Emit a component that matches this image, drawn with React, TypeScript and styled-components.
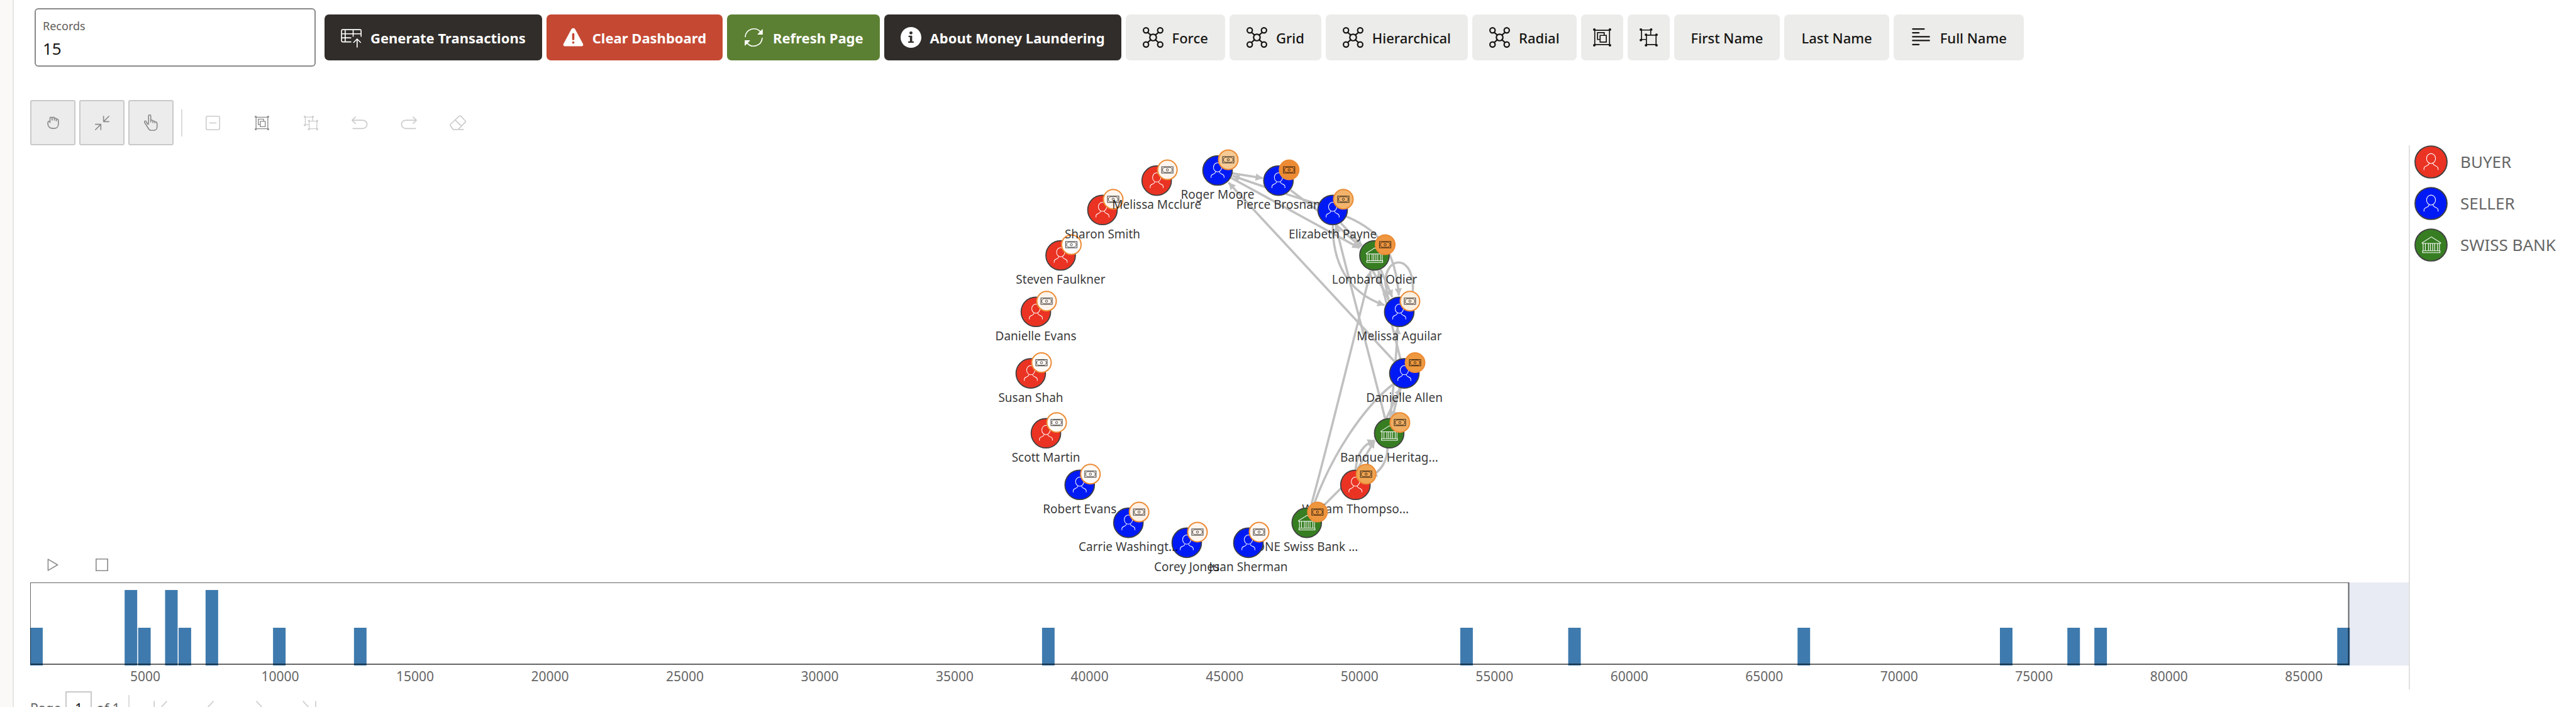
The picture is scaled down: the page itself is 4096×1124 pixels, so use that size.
import React from "react";
import styled, { createGlobalStyle, css } from "styled-components";

const GlobalStyle = createGlobalStyle`
  *, *::before, *::after { box-sizing: border-box; }
  html, body { margin: 0; background: #fff; }
  body, button, input { font-family: "Noto Sans", "Open Sans", sans-serif; }
  body { color: #161513; }
`;

const Shell = styled.div`
  display: flex;
  height: 100vh;
  overflow: hidden;
`;

const Rail = styled.aside`
  flex: none;
  width: 22px;
  background: #faf9f7;
  border-right: 2px solid #e6e5e3;
`;

const Main = styled.main`
  flex: 1;
  min-width: 0;
  display: flex;
  flex-direction: column;
  padding: 13px 0 0 26px;
`;

const Header = styled.header`
  display: flex;
  align-items: center;
  gap: 14px;
  padding-left: 7px;
`;

const Field = styled.div`
  display: flex;
  flex-direction: column;
  gap: 6px;
  width: 447px;
  height: 93px;
  padding: 14px 11px 0;
  border: 2px solid #8a8a8a;
  border-radius: 6px;
`;

const FieldLabel = styled.label`
  font-size: 18px;
  line-height: 24px;
  color: #5f5c59;
`;

const FieldInput = styled.input`
  width: 100%;
  padding: 0;
  border: 0;
  outline: 0;
  background: none;
  font-size: 26px;
  line-height: 36px;
  color: #161513;
`;

const ButtonRow = styled.div`
  display: flex;
  gap: 7px;
`;

type Tone = "dark" | "danger" | "success" | "light";
const toneColor: Record<Tone, string> = {
  dark: "#312d2a",
  danger: "#c54833",
  success: "#5c8033",
  light: "#ececea",
};

const ActionButton = styled.button<{ $tone: Tone; $compact?: boolean }>`
  display: flex;
  align-items: center;
  justify-content: center;
  gap: 14px;
  height: 73px;
  padding: 0 ${(p) => (p.$compact ? 17 : p.$tone === "light" ? 27 : 26)}px;
  border: 0;
  border-radius: 7px;
  background: ${(p) => toneColor[p.$tone]};
  color: ${(p) => (p.$tone === "light" ? "#161513" : "#fff")};
  font-size: 22px;
  font-weight: ${(p) => (p.$tone === "light" ? 500 : 700)};
  line-height: 30px;
  white-space: nowrap;
`;

const IconBox = styled.svg`
  flex: none;
  width: 33px;
  height: 33px;
  fill: none;
  stroke: currentColor;
  stroke-linecap: round;
  stroke-linejoin: round;
`;

const Toolbar = styled.div`
  display: flex;
  align-items: center;
  gap: 6px;
  margin-top: 53px;
`;

const ToolButton = styled.button<{ $active?: boolean; $short?: boolean }>`
  display: flex;
  align-items: center;
  justify-content: center;
  width: 72px;
  height: ${(p) => (p.$short ? 56 : 72)}px;
  padding: 0;
  border: 2px solid transparent;
  border-radius: 3px;
  background: none;
  color: #8b8b8b;
  ${(p) =>
    p.$active &&
    css`
      background: #ececec;
      border-color: #c9c9c9;
    `}
  &:disabled {
    color: #cccccc;
  }
`;

const ToolIcon = styled.svg`
  fill: none;
  stroke: currentColor;
  stroke-width: 6;
  stroke-linecap: round;
  stroke-linejoin: round;
`;

const Divider = styled.span`
  width: 2px;
  height: 43px;
  margin: 0 6px;
  background: #dcdcdc;
`;

const Workspace = styled.section`
  display: flex;
`;

const ChartColumn = styled.div`
  flex: 1;
  min-width: 0;
  border-right: 2px solid #e0e0e0;
`;

const Canvas = styled.div`
  display: grid;
  height: 695px;
`;

const Graph = styled.svg`
  grid-area: 1 / 1;
  justify-self: center;
  overflow: visible;
`;

const Playback = styled.div`
  grid-area: 1 / 1;
  align-self: end;
  justify-self: start;
  display: flex;
  gap: 6px;
`;

const NodeLabel = styled.text`
  font-size: 19px;
  text-anchor: middle;
  fill: rgba(0, 0, 0, 0.8);
`;

const Timeline = styled.svg`
  display: block;
  width: 100%;
  height: 170px;
`;

const TickLabel = styled.text`
  font-size: 21px;
  text-anchor: middle;
  fill: #666;
`;

const Legend = styled.ul`
  display: flex;
  flex-direction: column;
  gap: 13px;
  width: 264px;
  margin: 0;
  padding: 0 0 0 7px;
  list-style: none;
`;

const LegendItem = styled.li`
  display: flex;
  align-items: center;
  gap: 20px;
  font-size: 26px;
  line-height: 53px;
  color: #666;
`;

const Pager = styled.nav`
  display: flex;
  align-items: center;
  gap: 7px;
  margin-top: 2px;
  font-size: 21px;
  line-height: 30px;
  color: #666;
`;

const PageInput = styled.input`
  width: 42px;
  height: 54px;
  padding: 0;
  border: 2px solid #c9c9c9;
  font-size: 21px;
  text-align: center;
  color: #161513;
`;

/* Header icons, all on a 120-unit grid */

const GenerateIcon = () => (
  <IconBox viewBox="0 0 120 120" strokeWidth={6}>
    <path d="M58 86H10a6 6 0 0 1-6-6V21a6 6 0 0 1 6-6H111a6 6 0 0 1 6 6V54M25 15V86M4 39H117M4 62H58M71 15V54M94 116V70M74 89L94 69L114 89" />
  </IconBox>
);

const WarningIcon = () => (
  <IconBox viewBox="0 0 120 120">
    <path
      d="M50 11Q60 2 70 11L117 98Q120 110 108 111H12Q0 110 3 98Z"
      fill="currentColor"
      stroke="none"
    />
    <path d="M60 41V70M60 89V90" stroke={toneColor.danger} strokeWidth={13} />
  </IconBox>
);

const RefreshIcon = () => (
  <IconBox viewBox="0 0 120 120" strokeWidth={6}>
    <path d="M11 56A50 50 0 0 1 98 27M109 64A50 50 0 0 1 22 93" />
    <path d="M110 15V42H84ZM10 105V78H36Z" fill="currentColor" strokeWidth={4} />
  </IconBox>
);

const InfoIcon = () => (
  <IconBox viewBox="0 0 120 120">
    <circle cx="60" cy="60" r="60" fill="currentColor" stroke="none" />
    <g fill={toneColor.dark} stroke="none">
      <circle cx="60" cy="34" r="9" />
      <path d="M46 50H67V83H76V91H44V83H54V58H46Z" />
    </g>
  </IconBox>
);

const GraphIcon = () => (
  <IconBox viewBox="0 0 120 120" strokeWidth={8}>
    {[
      [19, 19],
      [101, 19],
      [19, 101],
      [101, 101],
    ].map(([x, y]) => (
      <circle key={`${x}-${y}`} cx={x} cy={y} r={15} />
    ))}
    <circle cx="60" cy="60" r="19" />
    <path d="M29 31L46 46M91 31L74 46M29 89L46 74M91 89L74 74" />
  </IconBox>
);

const AlignIcon = () => (
  <IconBox viewBox="0 0 120 120" strokeWidth={8}>
    <path d="M12 11H78M12 33H48M12 56H108M12 78H108M12 101H48" />
  </IconBox>
);

const Dots = ({ at }: { at: number[][] }) => (
  <g fill="currentColor" stroke="none">
    {at.map(([x, y]) => (
      <circle key={`${x}-${y}`} cx={x} cy={y} r={6} />
    ))}
  </g>
);

const GroupShape = () => (
  <>
    <path d="M8 9H77V76H8ZM31 52H21V20H52V30M33 33H62V64H33Z" strokeWidth={5} strokeLinejoin="miter" />
    <Dots at={[[6, 6], [79, 6], [6, 79], [79, 79]]} />
  </>
);

const UngroupShape = () => (
  <>
    <path d="M28 52H9V8H52V28M32 32H77V76H32Z" strokeWidth={5} strokeLinejoin="miter" />
    <Dots at={[[6, 6], [54, 6], [6, 55], [30, 30], [79, 30], [30, 79], [79, 79]]} />
  </>
);

/* Circular node glyphs, drawn around the node centre */

type Kind = "BUYER" | "SELLER" | "SWISS BANK";
const kindColor: Record<Kind, string> = {
  BUYER: "#ea3323",
  SELLER: "#001af5",
  "SWISS BANK": "#377e22",
};

const NodeGlyph = ({ kind }: { kind: Kind }) => (
  <g fill="none" stroke="#fff" strokeWidth={4}>
    <circle r={93} fill={kindColor[kind]} stroke="#404040" strokeWidth={7} />
    {kind === "SWISS BANK" ? (
      <>
        <path d="M-52 -13V-9H56V-13L2 -47Z" />
        <path d="M-46 -9V32M-33 -9V32M-15 -9V32M-4 -9V32M9 -9V32M21 -9V32M38 -9V32M49 -9V32" />
        <path d="M-49 34H52V45H-49Z" />
      </>
    ) : (
      <>
        <ellipse cy={-20} rx={26} ry={29} />
        <path d="M-41 47V37C-41 19 -12 26 -12 7M41 47V37C41 19 12 26 12 7" />
      </>
    )}
  </g>
);

const nodes: { name: string; kind: Kind; heat: string }[] = [
  { name: "Roger Moore", kind: "SELLER", heat: "#f6ca94" },
  { name: "Pierce Brosnan", kind: "SELLER", heat: "#ed8b34" },
  { name: "Elizabeth Payne", kind: "SELLER", heat: "#f2b46c" },
  { name: "Lombard Odier", kind: "SWISS BANK", heat: "#ee9640" },
  { name: "Melissa Aguilar", kind: "SELLER", heat: "#fbefe0" },
  { name: "Danielle Allen", kind: "SELLER", heat: "#ee993f" },
  { name: "Banque Heritag...", kind: "SWISS BANK", heat: "#efad62" },
  { name: "William Thompso...", kind: "BUYER", heat: "#f0a552" },
  { name: "ONE Swiss Bank ...", kind: "SWISS BANK", heat: "#ee963e" },
  { name: "Juan Sherman", kind: "SELLER", heat: "#fff7f2" },
  { name: "Corey Jones", kind: "SELLER", heat: "#fff5ee" },
  { name: "Carrie Washingt...", kind: "SELLER", heat: "#fdf1e6" },
  { name: "Robert Evans", kind: "SELLER", heat: "#fffaf6" },
  { name: "Scott Martin", kind: "BUYER", heat: "#fffbf7" },
  { name: "Susan Shah", kind: "BUYER", heat: "#fffaf6" },
  { name: "Danielle Evans", kind: "BUYER", heat: "#fff4ec" },
  { name: "Steven Faulkner", kind: "BUYER", heat: "#ffffff" },
  { name: "Sharon Smith", kind: "BUYER", heat: "#fff5ee" },
  { name: "Melissa Mcclure", kind: "BUYER", heat: "#fff5ee" },
];

const RADIUS = 298;

const arrowEdges = [
  "M228 224L403 252",
  "M890 475L700 395C540 345 420 305 228 238",
  "M890 475C1090 560 1170 680 1190 930",
  "M220 250L962 656",
  "M565 322L820 515L970 650",
  "M855 512L977 642",
  "M808 520C806 720 880 910 1107 986",
  "M1110 1640C1030 1310 900 840 825 525",
  "M1165 1312L205 277",
  "M685 2135C780 1790 930 1180 1027 788",
  "M1200 1300L1072 788",
  "M1085 780L1152 940",
  "M1035 780L1132 950",
  "M1140 1640C1155 1500 1175 1300 1183 1113",
  "M1118 1640L1202 1465",
  "M1196 1460L1152 1640",
  "M940 1935C950 1840 985 1790 1050 1768",
  "M950 1935L1050 1770",
  "M1125 1810C1122 1890 1090 1940 1025 1980",
];
const plainEdges = [
  "M1270 920C1290 690 1110 690 1112 860L1130 960",
  "M700 2135C800 1860 980 1580 1160 1440",
  "M740 2160L870 2030",
];

const Badge = ({ heat }: { heat: string }) => (
  <g transform="translate(17 -17)">
    <circle r={15.5} fill={heat} stroke="#ed8b34" strokeWidth={2} />
    <g fill="none" stroke="#000" strokeOpacity={0.65}>
      <rect x={-9} y={-5} width={18} height={10} strokeWidth={1.2} />
      <path d="M-5 -4H5Q5.500 -2.500 7.500 -2V2Q5.500 2.500 5 4H-5Q-5.500 2.500 -7.500 2V-2Q-5.500 -2.500 -5 -4Z" strokeWidth={0.9} />
      <circle r={1.8} strokeWidth={1} />
    </g>
  </g>
);

const NetworkGraph = () => (
  <Graph width={800} height={695} viewBox="-397 -338 800 695" role="img" aria-label="Transaction network">
    <defs>
      <marker id="tip" viewBox="0 0 42 42" refX={41} refY={21} markerWidth={42} markerHeight={42} markerUnits="userSpaceOnUse" orient="auto">
        <path d="M0 0L42 21L0 42Z" fill="#c0c0c0" />
      </marker>
    </defs>
    <g transform="translate(-39 -355) scale(.275)" fill="none" stroke="#c0c0c0" strokeWidth={13}>
      {arrowEdges.map((d) => (
        <path key={d} d={d} markerEnd="url(#tip)" />
      ))}
      {plainEdges.map((d) => (
        <path key={d} d={d} />
      ))}
    </g>
    {nodes.map((node, i) => {
      const angle = (i / nodes.length) * Math.PI * 2;
      const x = Math.sin(angle) * RADIUS;
      const y = -Math.cos(angle) * RADIUS;
      return (
        <g key={node.name} transform={`translate(${x.toFixed(1)} ${y.toFixed(1)})`}>
          <g transform="scale(.252)">
            <NodeGlyph kind={node.kind} />
          </g>
          <Badge heat={node.heat} />
          <NodeLabel y={45}>{node.name}</NodeLabel>
        </g>
      );
    })}
  </Graph>
);

/* Histogram: the axis spans 176.3 bins of 500 each */

const BINS = 176.3;
const pct = (bin: number) => `${((bin / BINS) * 100).toFixed(3)}%`;
const bars: [number, number][] = [
  [0, 1], [7, 2], [8, 1], [10, 2], [11, 1], [13, 2], [18, 1], [24, 1], [75, 1],
  [106, 1], [114, 1], [131, 1], [146, 1], [151, 1], [153, 1], [171, 1],
];
const ticks = Array.from({ length: 17 }, (_, i) => (i + 1) * 5000);
const SELECTED = 171.85;

const Histogram = () => (
  <Timeline role="img" aria-label="Transactions by amount">
    <rect x={pct(SELECTED)} y={0} width={pct(BINS - SELECTED)} height={132} fill="#e8ebf4" />
    {bars.map(([bin, count]) => (
      <rect key={bin} x={pct(bin)} y={132 - count * 60} width={pct(0.93)} height={count * 60} fill="#3e7aad" />
    ))}
    <g fill="#000" fillOpacity={0.6}>
      <rect x={0} y={0} width={pct(SELECTED)} height={1} />
      <rect x={0} y={1} width={1} height={128} />
      <rect x={0} y={129} width={pct(SELECTED)} height={2} />
    </g>
    <line x1={pct(SELECTED)} x2={pct(SELECTED)} y1={0} y2={131} stroke="#000" strokeOpacity={0.6} strokeWidth={2} />
    {ticks.map((t) => (
      <TickLabel key={t} x={pct((t - 735) / 500)} y={157}>
        {t}
      </TickLabel>
    ))}
  </Timeline>
);

export default function App() {
  return (
    <>
      <GlobalStyle />
      <Shell>
        <Rail />
        <Main>
          <Header>
            <Field>
              <FieldLabel htmlFor="records">Records</FieldLabel>
              <FieldInput id="records" type="text" defaultValue="15" />
            </Field>
            <ButtonRow>
              <ActionButton $tone="dark"><GenerateIcon />Generate Transactions</ActionButton>
              <ActionButton $tone="danger"><WarningIcon />Clear Dashboard</ActionButton>
              <ActionButton $tone="success"><RefreshIcon />Refresh Page</ActionButton>
              <ActionButton $tone="dark"><InfoIcon />About Money Laundering</ActionButton>
              <ActionButton $tone="light"><GraphIcon />Force</ActionButton>
              <ActionButton $tone="light"><GraphIcon />Grid</ActionButton>
              <ActionButton $tone="light"><GraphIcon />Hierarchical</ActionButton>
              <ActionButton $tone="light"><GraphIcon />Radial</ActionButton>
              <ActionButton $tone="light" $compact aria-label="Group">
                <IconBox viewBox="-6 -6 97 97"><GroupShape /></IconBox>
              </ActionButton>
              <ActionButton $tone="light" $compact aria-label="Ungroup">
                <IconBox viewBox="-6 -6 97 97"><UngroupShape /></IconBox>
              </ActionButton>
              <ActionButton $tone="light">First Name</ActionButton>
              <ActionButton $tone="light">Last Name</ActionButton>
              <ActionButton $tone="light"><AlignIcon />Full Name</ActionButton>
            </ButtonRow>
          </Header>

          <Toolbar role="toolbar" aria-label="Graph tools">
            <ToolButton $active aria-label="Pan">
              <ToolIcon width={19} height={20} viewBox="0 0 68 72">
                <path d="M16 36V10C16 3 27 3 28 11C30 2 41 3 41 12C43 7 52 9 52 17C56 13 64 16 64 24V44C64 60 53 69 40 69H30C16 69 4 58 4 44V36C4 29 10 27 16 28M28 11V22M41 12V22M52 17V26" />
              </ToolIcon>
            </ToolButton>
            <ToolButton $active aria-label="Fit to screen">
              <ToolIcon width={23} height={23} viewBox="0 0 86 86">
                <path d="M83 3L53 33M51 3V35H83M3 83L33 53M3 51H35V83" />
              </ToolIcon>
            </ToolButton>
            <ToolButton $active aria-label="Select">
              <ToolIcon width={22} height={26} viewBox="0 0 80 96">
                <path d="M26 54V9A6.500 6.500 0 0 1 39 9V44M39 34C45 30 51 33 51 41V48M51 40C57 36 63 38 63 45V50M63 44C70 42 76 46 76 54V75C76 85 68 93 58 93H40C34 93 30 90 27 85L4 49C1 43 3 38 7 38C11 38 12 41 14 45L19 54C21 58 26 58 26 54" />
              </ToolIcon>
            </ToolButton>
            <Divider />
            <ToolButton disabled aria-label="Drop">
              <ToolIcon width={23} height={23} viewBox="0 0 86 86">
                <rect x={3} y={3} width={80} height={80} rx={9} />
                <path d="M24 43H62" />
              </ToolIcon>
            </ToolButton>
            <ToolButton aria-label="Group selection">
              <ToolIcon width={23} height={23} viewBox="0 0 85 85"><GroupShape /></ToolIcon>
            </ToolButton>
            <ToolButton disabled aria-label="Ungroup selection">
              <ToolIcon width={23} height={23} viewBox="0 0 85 85"><UngroupShape /></ToolIcon>
            </ToolButton>
            <ToolButton disabled aria-label="Undo">
              <ToolIcon width={26} height={21} viewBox="0 0 94 74">
                <path d="M22 3L3 21L22 40M3 21H62C98 21 98 69 62 69H8" />
              </ToolIcon>
            </ToolButton>
            <ToolButton disabled aria-label="Redo">
              <ToolIcon width={26} height={21} viewBox="0 0 94 74">
                <path d="M72 3L91 21L72 40M91 21H32C-4 21 -4 69 32 69H86" />
              </ToolIcon>
            </ToolButton>
            <ToolButton disabled aria-label="Reset">
              <ToolIcon width={26} height={24} viewBox="0 0 93 86">
                <path d="M20 82L4 60Q2 56 5 52L54 6Q59 2 64 6L89 33Q92 37 88 41L48 82M32 28L66 62M20 82H78" />
              </ToolIcon>
            </ToolButton>
          </Toolbar>

          <Workspace>
            <ChartColumn>
              <Canvas>
                <NetworkGraph />
                <Playback>
                  <ToolButton $short aria-label="Play">
                    <ToolIcon width={18} height={20} viewBox="0 0 66 74">
                      <path d="M5 4L61 37L5 70Z" />
                    </ToolIcon>
                  </ToolButton>
                  <ToolButton $short aria-label="Stop">
                    <ToolIcon width={20} height={20} viewBox="0 0 74 74">
                      <path d="M3 3H71V71H3Z" strokeLinejoin="miter" />
                    </ToolIcon>
                  </ToolButton>
                </Playback>
              </Canvas>
              <Histogram />
            </ChartColumn>
            <Legend>
              {(Object.keys(kindColor) as Kind[]).map((kind) => (
                <LegendItem key={kind}>
                  <svg width={53} height={53} viewBox="-97 -97 194 194" aria-hidden="true">
                    <NodeGlyph kind={kind} />
                  </svg>
                  {kind}
                </LegendItem>
              ))}
            </Legend>
          </Workspace>

          <Pager aria-label="Pages">
            <label htmlFor="page">Page</label>
            <PageInput id="page" type="text" defaultValue="1" />
            <span>of 1</span>
            <Divider />
            <ToolButton $short disabled aria-label="First page">
              <ToolIcon width={22} height={24} viewBox="0 0 80 88"><path d="M4 4V84M76 4L40 44L76 84" /></ToolIcon>
            </ToolButton>
            <ToolButton $short disabled aria-label="Previous page">
              <ToolIcon width={12} height={24} viewBox="0 0 44 88"><path d="M40 4L4 44L40 84" /></ToolIcon>
            </ToolButton>
            <ToolButton $short disabled aria-label="Next page">
              <ToolIcon width={12} height={24} viewBox="0 0 44 88"><path d="M4 4L40 44L4 84" /></ToolIcon>
            </ToolButton>
            <ToolButton $short disabled aria-label="Last page">
              <ToolIcon width={22} height={24} viewBox="0 0 80 88"><path d="M4 4L40 44L4 84M76 4V84" /></ToolIcon>
            </ToolButton>
          </Pager>
        </Main>
      </Shell>
    </>
  );
}
